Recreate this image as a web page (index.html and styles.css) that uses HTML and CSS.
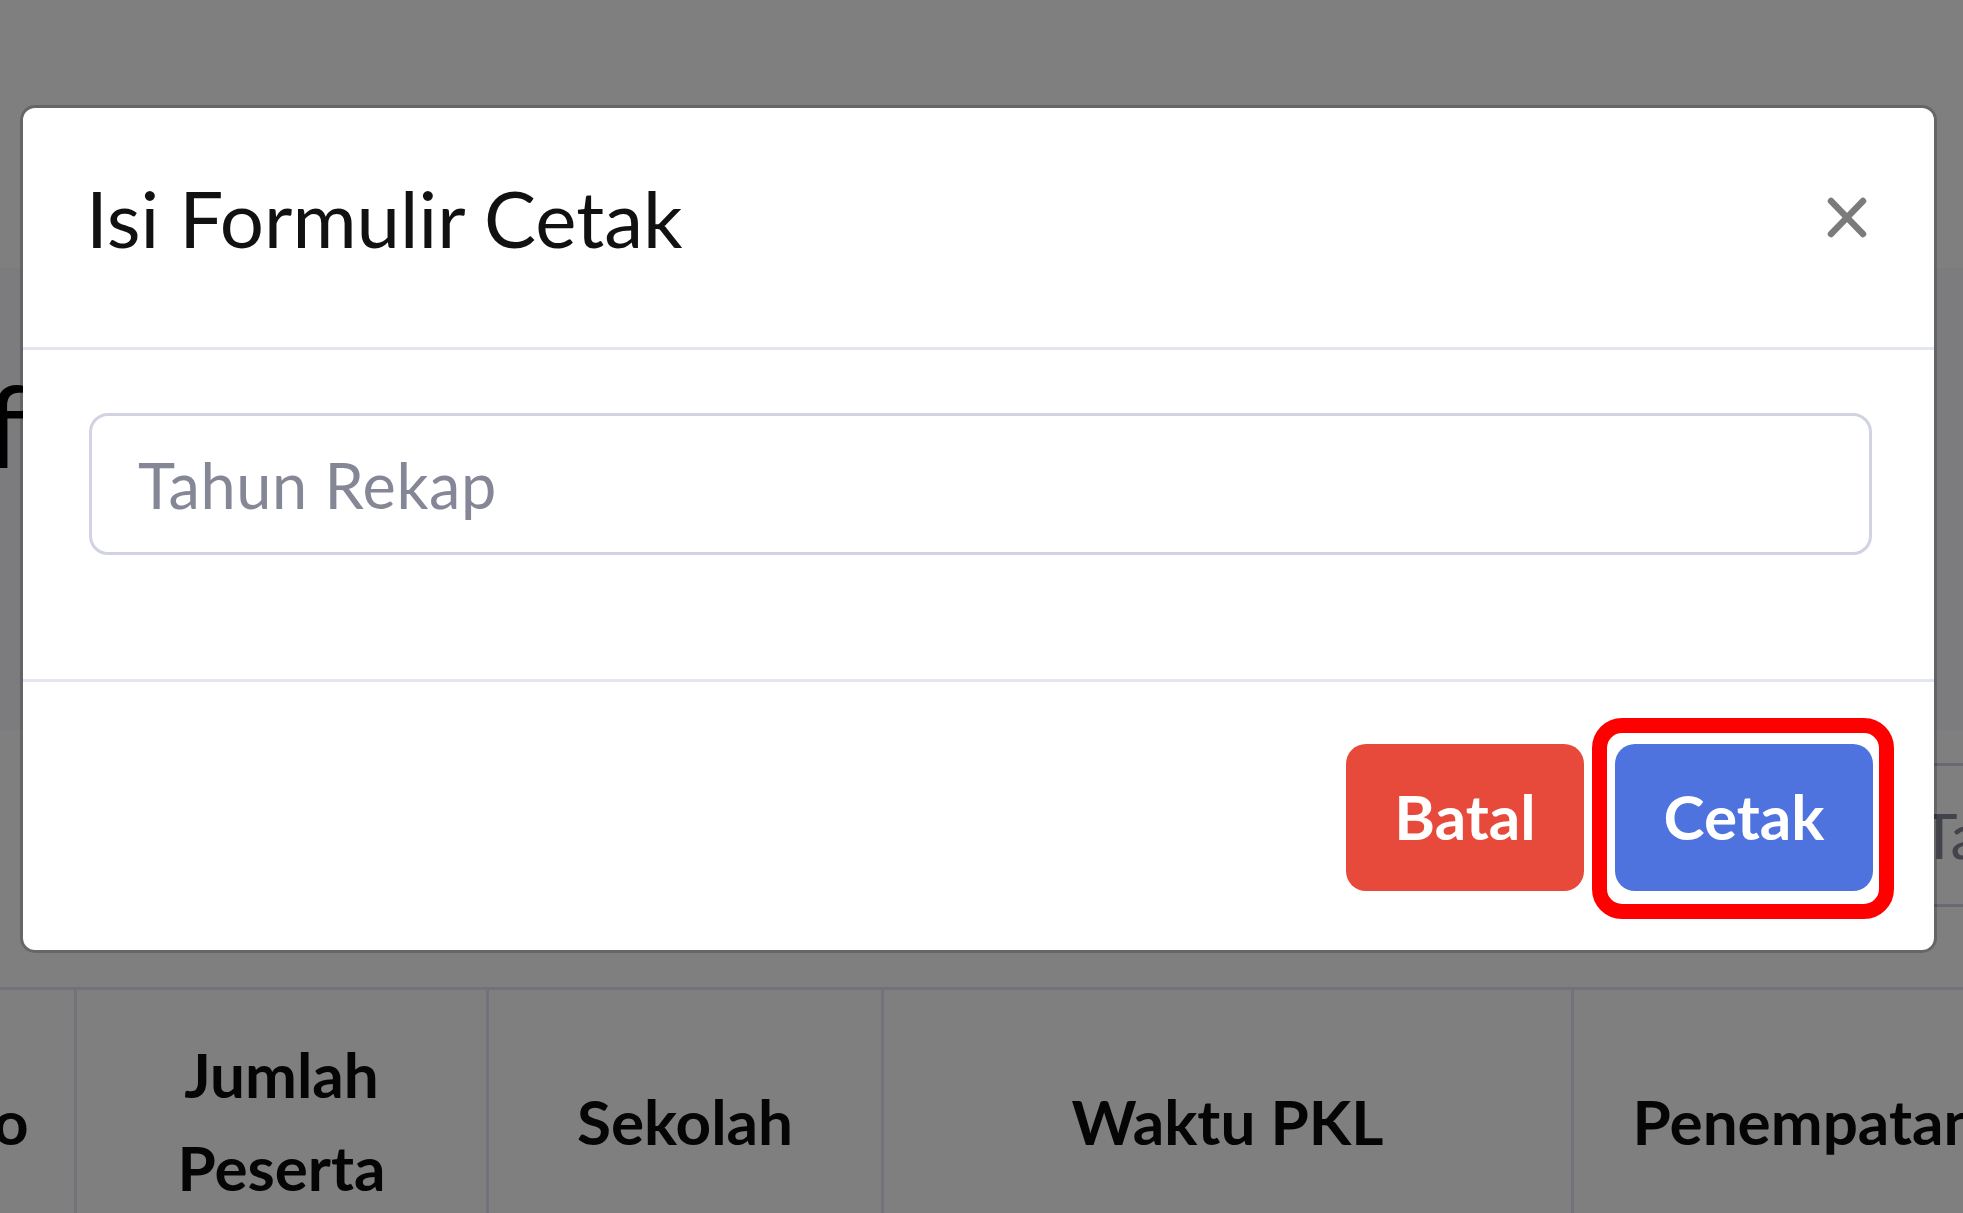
FILE: index.html
```html
<!DOCTYPE html>
<html lang="id">
<head>
<meta charset="utf-8">
<title>Isi Formulir Cetak</title>
<link rel="stylesheet" href="styles.css">
</head>
<body>
<div class="page">
  <header class="topbar"></header>
  <main class="content">
    <h1 class="page-title">Daftar PKL</h1>
    <section class="card">
      <div class="card-tools">
        <input class="search" type="text" placeholder="Tahun">
      </div>
      <table class="data-table">
        <colgroup>
          <col class="c-no"><col class="c-jml"><col class="c-sek"><col class="c-wkt"><col class="c-pen">
        </colgroup>
        <thead>
          <tr>
            <th>No</th>
            <th>Jumlah<br>Peserta</th>
            <th>Sekolah</th>
            <th>Waktu PKL</th>
            <th>Penempatan</th>
          </tr>
        </thead>
      </table>
    </section>
  </main>
</div>

<div class="backdrop"></div>

<div class="modal" role="dialog">
  <div class="modal-header">
    <h5 class="modal-title">Isi Formulir Cetak</h5>
    <svg class="close" width="40" height="41" viewBox="0 0 40 41" aria-label="Tutup">
      <line x1="4" y1="4" x2="36" y2="37"/>
      <line x1="36" y1="4" x2="4" y2="37"/>
    </svg>
  </div>
  <div class="modal-body">
    <div class="form-group">
      <input class="form-control" type="text" placeholder="Tahun Rekap">
    </div>
  </div>
  <div class="modal-footer">
    <button class="btn btn-danger">Batal</button>
    <button class="btn btn-primary highlighted">Cetak</button>
  </div>
</div>
</body>
</html>
```

FILE: styles.css
```css
* { box-sizing: border-box; }

html, body {
  margin: 0;
  padding: 0;
}

body {
  width: 1963px;
  height: 1213px;
  overflow: hidden;
  font-family: "Lato", "Open Sans", sans-serif;
  background: #f8f9fc;
  color: #111;
}

.page {
  width: 1963px;
  height: 1213px;
  overflow: hidden;
}

.topbar {
  height: 268px;
  background: #ffffff;
}

.content {
  display: flex;
  flex-direction: column;
}

.page-title {
  margin: 86px 0 0 -157px;
  font-size: 115px;
  font-weight: 400;
  line-height: 138px;
  color: #000;
  white-space: nowrap;
}

.card {
  margin-top: 238px;
  background: #ffffff;
  height: 600px;
}

.card-tools {
  display: flex;
  padding-top: 33px;
}

.search {
  margin-left: 1872px;
  width: 500px;
  height: 144px;
  flex: none;
  border: 3px solid #d1d3e2;
  border-radius: 19px;
  padding: 0 46px;
  font-family: inherit;
  font-size: 62px;
  background: #fff;
}
.search::placeholder { color: #858796; }

.data-table {
  margin: 80px 0 0 -102px;
  border-collapse: collapse;
  table-layout: fixed;
  width: 2139px;
}

.c-no { width: 176px; }
.c-jml { width: 412px; }
.c-sek { width: 395px; }
.c-wkt { width: 690px; }
.c-pen { width: 466px; }

.data-table th {
  border: 3px solid #e3e6f0;
  padding: 38px 10px 46px;
  font-size: 62px;
  font-weight: 700;
  line-height: 93px;
  color: #0a0a0a;
  text-align: center;
  vertical-align: middle;
  white-space: nowrap;
}

.backdrop {
  position: fixed;
  inset: 0;
  background: rgba(0, 0, 0, 0.5);
}

.modal {
  position: fixed;
  left: 20px;
  top: 105px;
  width: 1917px;
  background: #ffffff;
  background-clip: padding-box;
  border: 3px solid rgba(0, 0, 0, 0.2);
  border-radius: 15px;
  display: flex;
  flex-direction: column;
}

.modal-header {
  display: flex;
  justify-content: space-between;
  align-items: flex-start;
  padding: 52px 67px 70px 63px;
  border-bottom: 3px solid #e3e6f0;
}

.modal-title {
  margin: 0;
  font-size: 78px;
  font-weight: 400;
  line-height: 117px;
  color: #111;
}

.close {
  margin-top: 37px;
  stroke: #7b7b7b;
  stroke-width: 6.5;
  stroke-linecap: round;
  flex: none;
}

.modal-body {
  padding: 63px 62px 62px 66px;
}

.form-group {
  margin-bottom: 62px;
}

.form-control {
  display: block;
  width: 100%;
  height: 142px;
  border: 3px solid #d1d3e2;
  border-radius: 19px;
  padding: 0 46px;
  font-family: inherit;
  font-size: 63px;
  letter-spacing: 0.6px;
  color: #6e707e;
  background: #fff;
  outline: none;
}
.form-control::placeholder { color: #858796; }

.modal-footer {
  display: flex;
  justify-content: flex-end;
  gap: 31px;
  padding: 62px 61px 59px;
  border-top: 3px solid #e3e6f0;
}

.btn {
  height: 147px;
  border: 0;
  border-radius: 20px;
  font-family: inherit;
  font-size: 62px;
  font-weight: 700;
  color: #ffffff;
  display: flex;
  align-items: center;
  justify-content: center;
  padding: 0 0 4px;
}

.btn-danger {
  width: 238px;
  background: #e74a3b;
}

.btn-primary {
  width: 258px;
  background: #4e73df;
}

.highlighted {
  position: relative;
}

.highlighted::after {
  content: "";
  position: absolute;
  left: -23px;
  right: -21px;
  top: -26px;
  bottom: -28px;
  border: 15px solid #ff0000;
  border-radius: 30px;
}
```
